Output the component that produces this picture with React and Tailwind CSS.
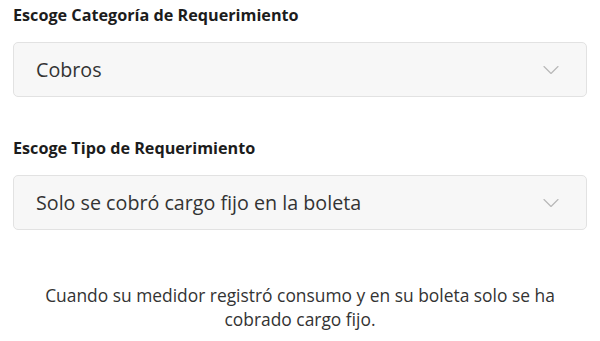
import { ChevronDown } from "lucide-react";

function SelectBox({ value }) {
  return (
    <div className="flex h-[55px] items-center justify-between rounded-[5px] border border-[#e2e2e2] bg-[#f7f7f7] pl-[22px] pr-[21px]">
      <span className="text-[19.7px] text-[#333333]">{value}</span>
      <ChevronDown className="h-[28px] w-[28px] text-[#b8b8b8]" strokeWidth={1} />
    </div>
  );
}

export default function App() {
  return (
    <div
      className="min-h-screen bg-white px-[13px] text-[#222222]"
      style={{ fontFamily: "'Open Sans', Lato, sans-serif" }}
    >
      <h2 className="mt-[3px] mb-[15px] text-[16.2px] leading-[24px] font-bold text-[#1c1c1c]">
        Escoge Categoría de Requerimiento
      </h2>
      <SelectBox value="Cobros" />

      <h2 className="mt-[39px] mb-[15px] text-[16.2px] leading-[24px] font-bold text-[#1c1c1c]">
        Escoge Tipo de Requerimiento
      </h2>
      <SelectBox value="Solo se cobró cargo fijo en la boleta" />

      <p className="mx-auto mt-[53px] max-w-[540px] text-center text-[17.4px] leading-[24px] text-[#333333]">
        Cuando su medidor registró consumo y en su boleta solo se ha cobrado cargo fijo.
      </p>
    </div>
  );
}
